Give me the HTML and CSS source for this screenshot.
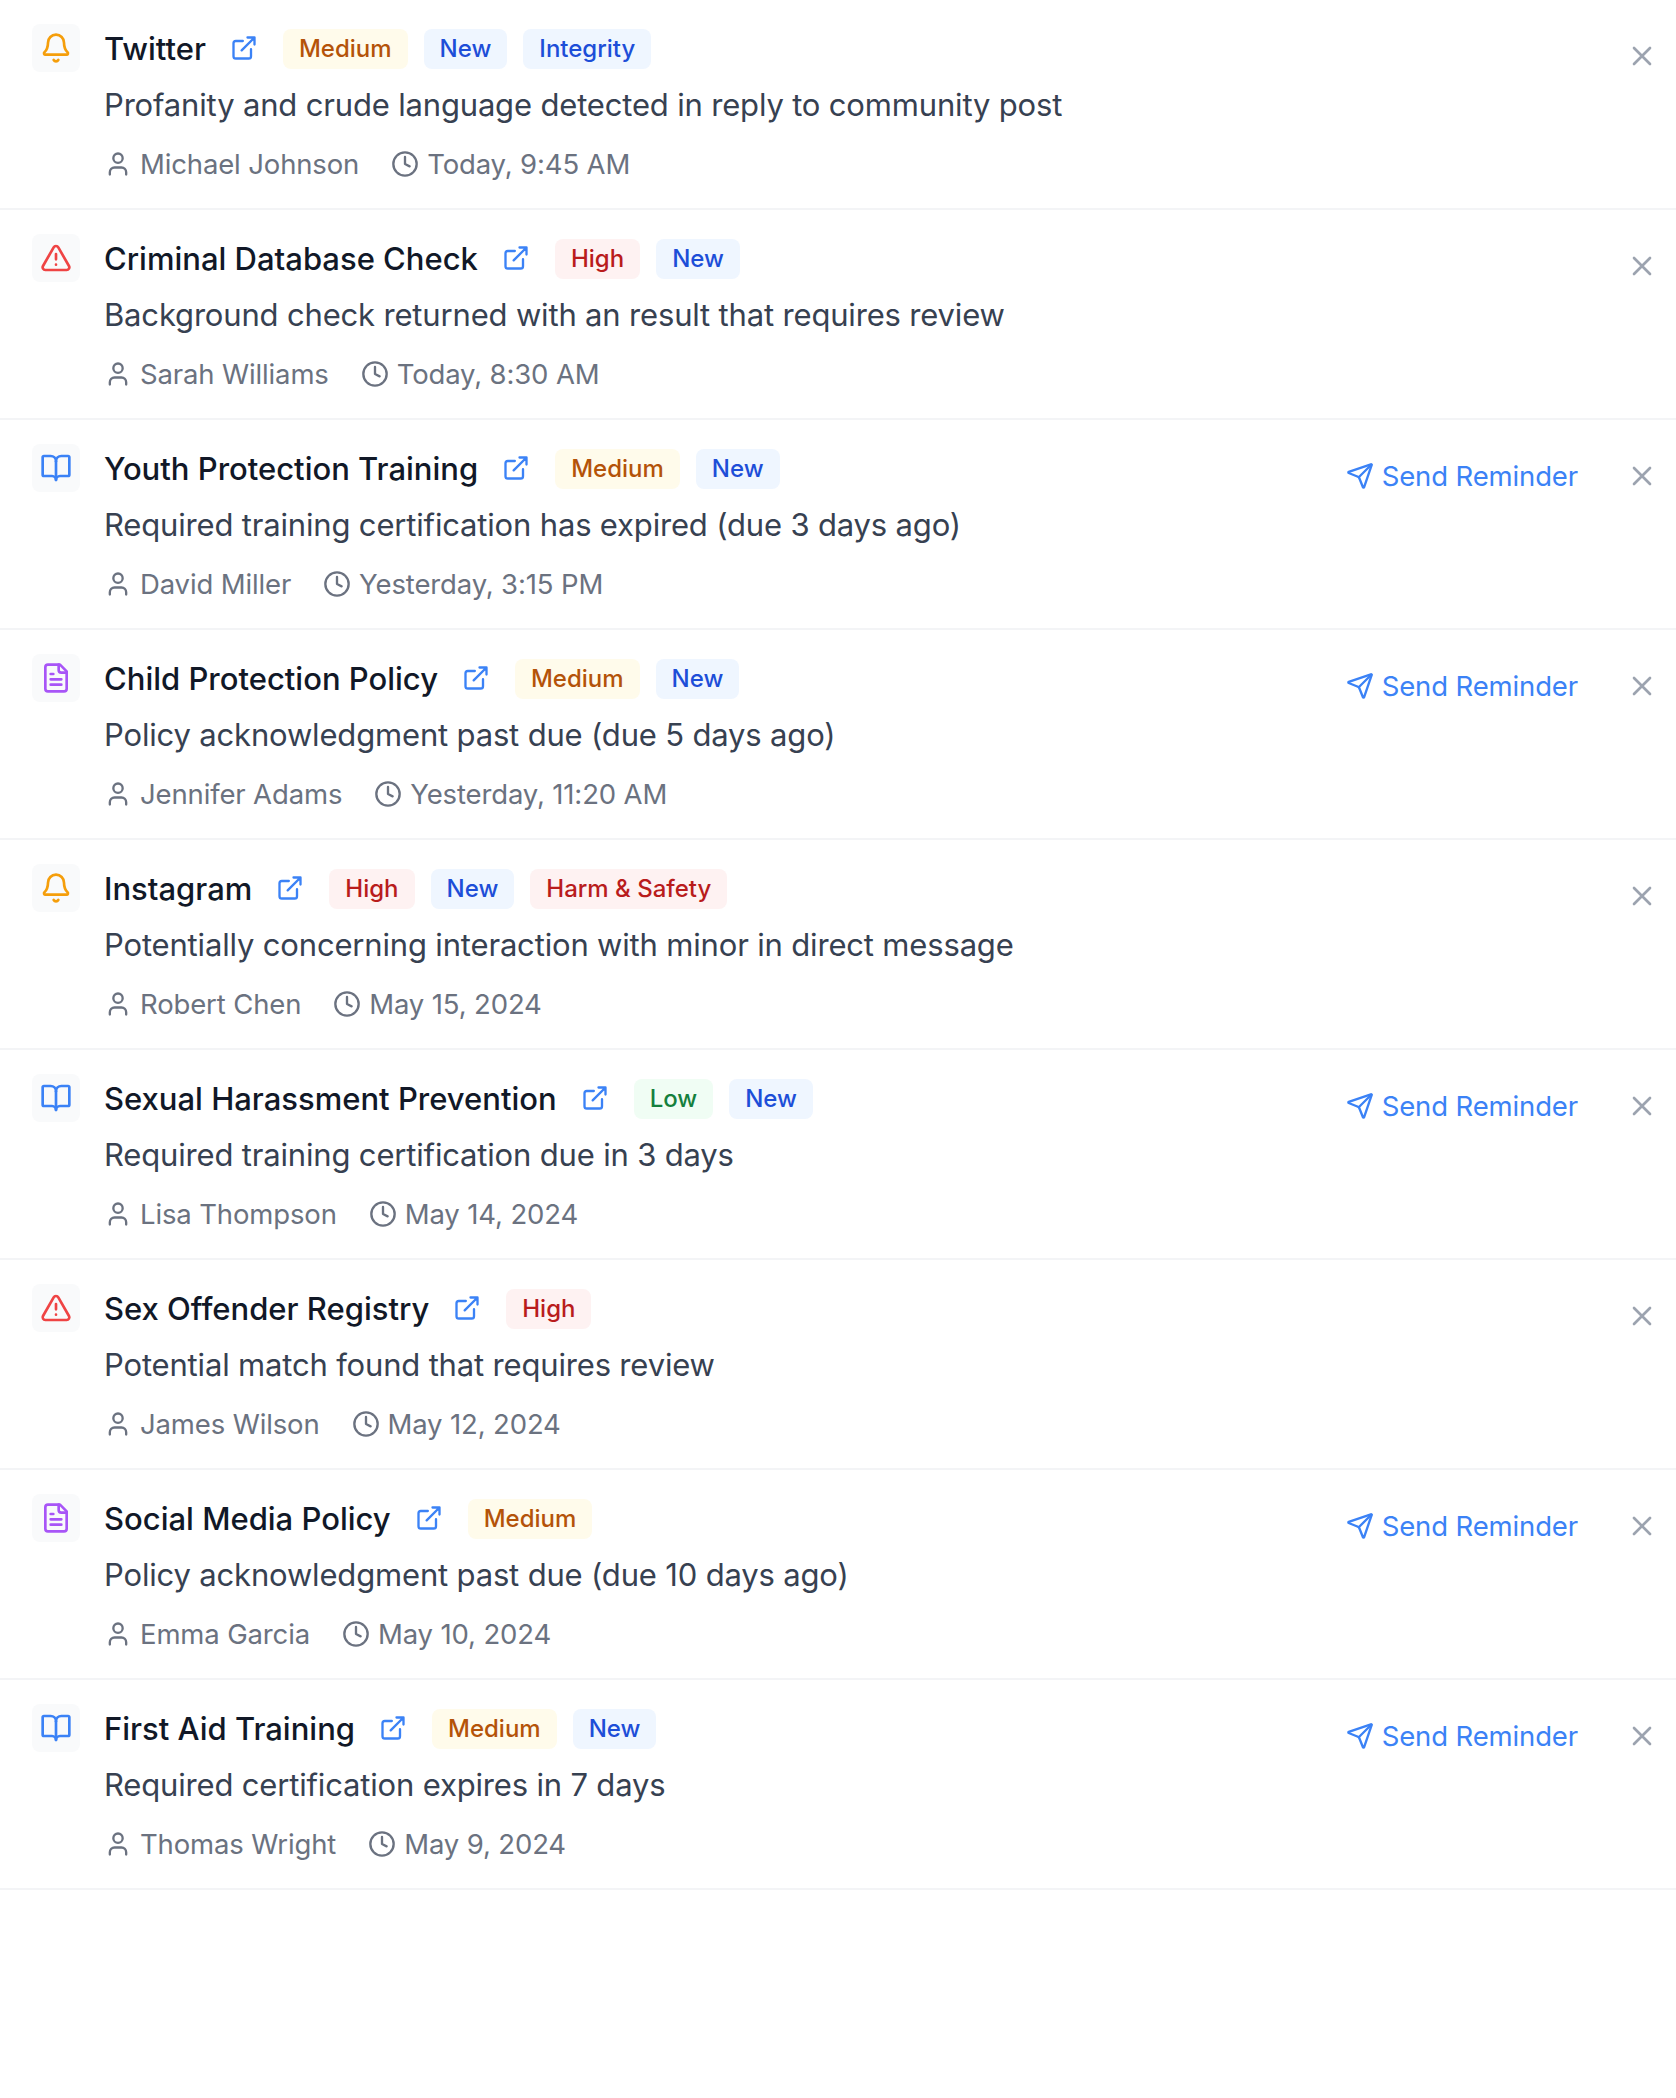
FILE: index.html
```html
<!DOCTYPE html>
<html lang="en">
<head>
<meta charset="utf-8">
<title>Alerts</title>
<link rel="stylesheet" href="styles.css">
</head>
<body>
<svg class="sprite" aria-hidden="true">
  <symbol id="bell" viewBox="0 0 24 24"><path d="M10.268 21a2 2 0 0 0 3.464 0"/><path d="M3.262 15.326A1 1 0 0 0 4 17h16a1 1 0 0 0 .74-1.673C19.41 13.956 18 12.499 18 8A6 6 0 0 0 6 8c0 4.499-1.411 5.956-2.738 7.326"/></symbol>
  <symbol id="warn" viewBox="0 0 24 24"><path d="m21.73 18-8-14a2 2 0 0 0-3.48 0l-8 14A2 2 0 0 0 4 21h16a2 2 0 0 0 1.73-3"/><path d="M12 9v4M12 17h.01"/></symbol>
  <symbol id="book" viewBox="0 0 24 24"><path d="M12 7v14"/><path d="M3 18a1 1 0 0 1-1-1V4a1 1 0 0 1 1-1h5a4 4 0 0 1 4 4 4 4 0 0 1 4-4h5a1 1 0 0 1 1 1v13a1 1 0 0 1-1 1h-6a3 3 0 0 0-3 3 3 3 0 0 0-3-3z"/></symbol>
  <symbol id="file" viewBox="0 0 24 24"><path d="M15 2H6a2 2 0 0 0-2 2v16a2 2 0 0 0 2 2h12a2 2 0 0 0 2-2V7Z"/><path d="M14 2v4a2 2 0 0 0 2 2h4M10 9H8M16 13H8M16 17H8"/></symbol>
  <symbol id="link" viewBox="0 0 24 24"><path d="M15 3h6v6M10 14 21 3M18 13v6a2 2 0 0 1-2 2H5a2 2 0 0 1-2-2V8a2 2 0 0 1 2-2h6"/></symbol>
  <symbol id="user" viewBox="0 0 24 24"><path d="M19 21v-2a4 4 0 0 0-4-4H9a4 4 0 0 0-4 4v2"/><circle cx="12" cy="7" r="4"/></symbol>
  <symbol id="clock" viewBox="0 0 24 24"><circle cx="12" cy="12" r="10"/><path d="M12 6v6l4 2"/></symbol>
  <symbol id="send" viewBox="0 0 24 24"><path d="M14.536 21.686a.5.5 0 0 0 .937-.024l6.5-19a.496.496 0 0 0-.635-.635l-19 6.5a.5.5 0 0 0-.024.937l7.93 3.18a2 2 0 0 1 1.112 1.11z"/><path d="m21.854 2.147-10.94 10.939"/></symbol>
  <symbol id="close" viewBox="0 0 24 24"><path d="M18 6 6 18M6 6l12 12"/></symbol>
</svg>
<main class="alerts" id="alerts"></main>
<script src="alerts.js"></script>
</body>
</html>
```
FILE: styles.css
```css
* { box-sizing: border-box; }
body { margin: 0; background: #fff; font-family: Inter, "Liberation Sans", sans-serif; color: #111827; }
.sprite { display: none; }
.icon { display: block; flex: none; fill: none; stroke: currentColor; stroke-width: 2; stroke-linecap: round; stroke-linejoin: round; }
.alert { display: flex; height: 210px; padding: 24px 18px 0 32px; border-bottom: 2px solid #f3f4f6; }
.kind { flex: none; width: 48px; height: 48px; padding: 8px; border-radius: 8px; background: #f9fafb; }
.kind .icon { width: 32px; height: 32px; }
.kind.bell { color: #f59e0b; }
.kind.warn { color: #ef4444; }
.kind.book { color: #3b82f6; }
.kind.file { color: #a855f7; }
.body { flex: 1; min-width: 0; margin: 1px 0 0 24px; white-space: nowrap; }
.head { display: flex; align-items: center; height: 48px; }
.title { margin: 0; font-size: 31px; font-weight: 500; line-height: 48px; }
.open { margin: -2px 25px 0 24px; color: #3b82f6; }
.open .icon { width: 28px; height: 28px; }
.tags { display: flex; gap: 16px; }
.tag { height: 40px; padding: 0 16px; border-radius: 8px; font-size: 24px; font-weight: 500; line-height: 40px; }
.medium { background: #fffbeb; color: #b45309; }
.high { background: #fef2f2; color: #b91c1c; }
.low { background: #f0fdf4; color: #15803d; }
.new { background: #eff6ff; color: #1d4ed8; }
.text { margin: 8px 0 0; font-size: 31px; line-height: 48px; letter-spacing: -0.17px; color: #374151; }
.meta { display: flex; gap: 32px; margin-top: 15px; font-size: 27.5px; line-height: 40px; letter-spacing: -0.14px; color: #6b7280; }
.meta span { display: flex; align-items: center; gap: 8px; }
.meta .icon { width: 28px; height: 28px; }
.actions { display: flex; align-items: center; height: 64px; font-size: 27.5px; letter-spacing: -0.13px; }
.send { display: flex; align-items: center; gap: 8px; margin-right: 48px; color: #3b82f6; }
.send .icon { width: 28px; height: 28px; }
.close { color: #9ca3af; }
.close .icon { width: 32px; height: 32px; }
```
FILE: alerts.js
```js
const alerts = [
  ["bell", "Twitter", ["Medium", "New", "Integrity"], "Profanity and crude language detected in reply to community post", "Michael Johnson", "Today, 9:45 AM"],
  ["warn", "Criminal Database Check", ["High", "New"], "Background check returned with an result that requires review", "Sarah Williams", "Today, 8:30 AM"],
  ["book", "Youth Protection Training", ["Medium", "New"], "Required training certification has expired (due 3 days ago)", "David Miller", "Yesterday, 3:15 PM"],
  ["file", "Child Protection Policy", ["Medium", "New"], "Policy acknowledgment past due (due 5 days ago)", "Jennifer Adams", "Yesterday, 11:20 AM"],
  ["bell", "Instagram", ["High", "New", "Harm & Safety"], "Potentially concerning interaction with minor in direct message", "Robert Chen", "May 15, 2024"],
  ["book", "Sexual Harassment Prevention", ["Low", "New"], "Required training certification due in 3 days", "Lisa Thompson", "May 14, 2024"],
  ["warn", "Sex Offender Registry", ["High"], "Potential match found that requires review", "James Wilson", "May 12, 2024"],
  ["file", "Social Media Policy", ["Medium"], "Policy acknowledgment past due (due 10 days ago)", "Emma Garcia", "May 10, 2024"],
  ["book", "First Aid Training", ["Medium", "New"], "Required certification expires in 7 days", "Thomas Wright", "May 9, 2024"],
];
const tones = { Medium: "medium", High: "high", Low: "low", New: "new", Integrity: "new", "Harm & Safety": "high" };
const icon = (id) => `<svg class="icon"><use href="#${id}"/></svg>`;
const esc = (s) => s.replace("&", "&amp;");
document.getElementById("alerts").innerHTML = alerts.map(([kind, title, tags, text, who, when]) => `
<article class="alert">
  <div class="kind ${kind}">${icon(kind)}</div>
  <div class="body">
    <div class="head"><h3 class="title">${title}</h3><a class="open">${icon("link")}</a>
      <div class="tags">${tags.map((t) => `<span class="tag ${tones[t]}">${esc(t)}</span>`).join("")}</div></div>
    <p class="text">${text}</p>
    <div class="meta"><span>${icon("user")}${who}</span><span>${icon("clock")}${when}</span></div>
  </div>
  <div class="actions">${kind === "book" || kind === "file" ? `<a class="send">${icon("send")}Send Reminder</a>` : ""}<a class="close">${icon("close")}</a></div>
</article>`).join("");
```
